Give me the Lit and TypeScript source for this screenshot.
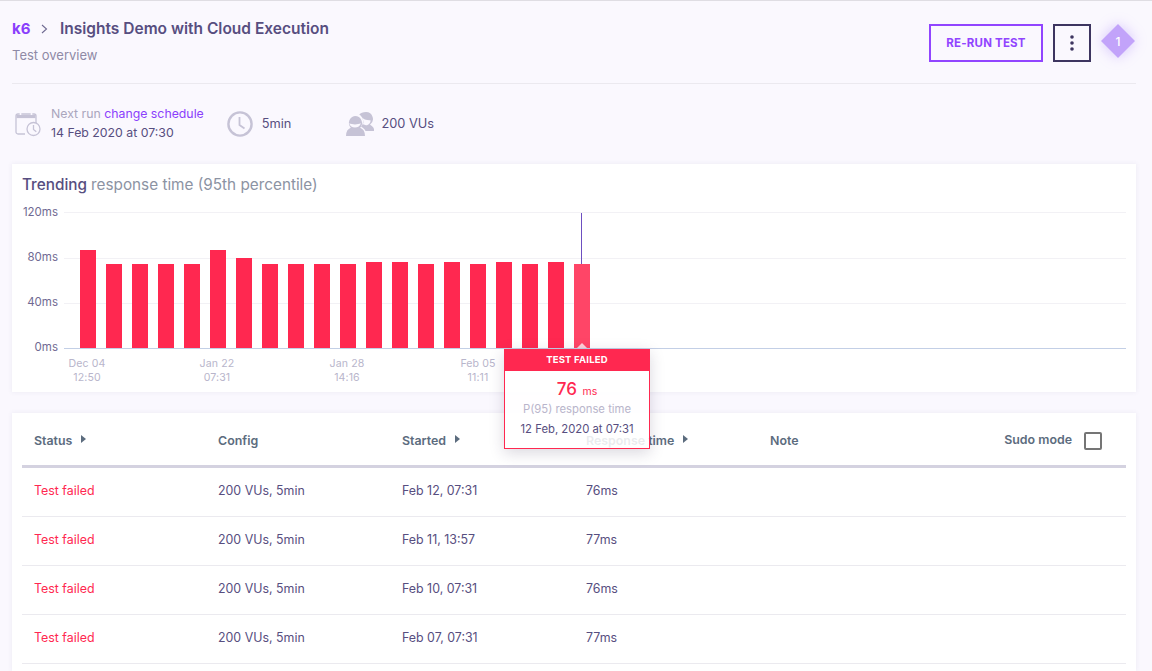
import { LitElement, html, css, svg } from "lit";
import { customElement } from "lit/decorators.js";

const tops = [250,264,264,264,264,250,258,264,264,264,264,262,262,264,262,264,262,264,262,264];
const rows = [
  ["Feb 12, 07:31", "76ms"],
  ["Feb 11, 13:57", "77ms"],
  ["Feb 10, 07:31", "76ms"],
  ["Feb 07, 07:31", "77ms"],
];
const yLabels: [string, number, number][] = [["120ms", 212, 216], ["80ms", 258, 261], ["40ms", 303, 306], ["0ms", 348, 351]];
const xLabels: [string, string, number][] = [["Dec 04", "12:50", 86], ["Jan 22", "07:31", 216], ["Jan 28", "14:16", 346], ["Feb 05", "11:11", 477]];

@customElement("app-root")
export class AppRoot extends LitElement {
  static styles = css`
    :host { display: flex; flex-direction: column; height: 671px; overflow: hidden; box-sizing: border-box; border-top: 1px solid #dfdde3; background: #faf8fe; font-family: "Inter", "Noto Sans", sans-serif; color: #574e80; padding: 0 16px 0 12px; }
    * { box-sizing: border-box; }
    .head { display: flex; justify-content: space-between; height: 83px; border-bottom: 1px solid #ebe9ef; padding-top: 23px; flex: none; }
    .crumb { display: flex; align-items: center; height: 10px; font-size: 15.5px; font-weight: 600; line-height: 10px; }
    .k6 { color: #8a3ffc; width: 29px; font-weight: 700; font-size: 15px; }
    .chev { width: 19px; }
    .sub { font-size: 13px; color: #8f8aa6; margin-top: 13px; line-height: 16px; }
    .actions { display: flex; align-items: flex-start; }
    .rerun { width: 114px; height: 38px; border: 2px solid #9145ff; color: #9145ff; font-size: 11.5px; font-weight: 700; display: flex; align-items: center; justify-content: center; letter-spacing: .2px; }
    .more { width: 38px; height: 38px; border: 2px solid #3d3560; margin-left: 10px; display: flex; align-items: center; justify-content: center; }
    .badge { width: 34px; height: 34px; margin: 0 1px 0 10px; display: flex; align-items: center; justify-content: center; }
    .diamond { width: 24px; height: 24px; background: #c2a3fa; transform: rotate(45deg); box-shadow: 0 0 14px rgba(160,120,250,.4); display: flex; align-items: center; justify-content: center; }
    .diamond span { transform: rotate(-45deg); color: #fff; font-size: 12px; font-weight: 500; }
    .meta { display: flex; align-items: center; height: 80px; flex: none; font-size: 12.3px; padding: 0 0 1px 3px; }
    .meta-item { display: flex; align-items: center; }
    .item-time { margin-left: 23px; }
    .item-vus { margin-left: 55px; }
    .val { font-size: 12.8px; margin-left: 9px; }
    .item-vus .val { margin-left: 7px; }
    .next { line-height: 19px; margin: 0 0 2px 10px; }
    .muted { color: #aaa6bd; }
    .link { color: #8a3ffc; }
    .card { background: #fff; box-shadow: 0 0 5px rgba(70,60,110,.08); }
    .chart { height: 228px; position: relative; flex: none; padding: 12px 10px 0 10px; }
    .chart h2 { margin: 0; font-size: 15.3px; font-weight: 500; color: #574e80; line-height: 18px; }
    .chart h2 span { color: #8c93a3; font-weight: 400; }
    .plot { display: block; position: absolute; left: 0; top: 0; }
    .plot text { font-family: "Inter", "Noto Sans", sans-serif; font-size: 11.5px; }
    .plot text.x { font-size: 10.6px; letter-spacing: .1px; }
    .tip { position: absolute; left: 492px; top: 185px; width: 146px; height: 100px; border: 1px solid #ff2850; background: rgba(255,255,255,.87); box-shadow: 0 4px 14px rgba(50,40,80,.18); z-index: 2; text-align: center; }
    .tip-h { height: 21px; background: #ff2850; color: #fff; font-size: 9.5px; font-weight: 700; line-height: 20px; letter-spacing: .2px; }
    .tip-v { color: #ff2850; font-size: 17px; font-weight: 500; line-height: 20px; margin-top: 8px; }
    .tip-v small { font-size: 10.5px; font-weight: 400; margin-left: 1px; }
    .tip-l { color: #b9b5cb; font-size: 11.3px; line-height: 14px; margin-top: 0; }
    .tip-d { color: #574e80; font-size: 11.3px; line-height: 14px; margin-top: 6px; }
    .table { flex: 1; margin-top: 21px; padding: 0 10px; }
    .tr { display: grid; grid-template-columns: repeat(5, 184px) 1fr; align-items: center; padding-left: 12px; }
    .th { height: 55px; border-bottom: 3px solid #d4d2e0; font-size: 12.4px; font-weight: 600; color: #5c6c7e; padding-top: 3px; }
    .td { height: 49px; border-bottom: 1px solid #ebeaef; font-size: 12.4px; color: #574e80; padding-bottom: 3px; }
    .fail { color: #ff2850; }
    .sort { display: inline-block; width: 0; height: 0; border-left: 5px solid #5c6c7e; border-top: 4px solid transparent; border-bottom: 4px solid transparent; margin-left: 9px; position: relative; top: -2px; }
    .sudo { display: flex; justify-content: flex-end; align-items: center; gap: 12px; padding-right: 24px; }
    .sudo span { position: relative; top: -1px; }
    .box { width: 18px; height: 18px; border: 2px solid #757575; border-radius: 2px; }
  `;

  private plot() {
    return html`<svg class="plot" width="1124" height="228" viewBox="12 164 1124 228">
      ${yLabels.map(([t, y, ty]) => svg`
        <line x1="64" x2="1126" y1=${y + 0.5} y2=${y + 0.5} stroke=${t === "0ms" ? "#c3cfe6" : "#f2f1f5"} />
        <text x="58" y=${ty} text-anchor="end" fill="#6f6a92">${t}</text>`)}
      ${tops.map((t, i) => svg`<rect x=${80 + i * 26} y=${t} width="16" height=${348 - t} fill=${i === 19 ? "#ff4567" : "#ff2850"} />`)}
      <line x1="581.5" x2="581.5" y1="213" y2="264" stroke="#6d4fc0" />
      <path d="M577 348 L582 343 L587 348 Z" fill="#fff" opacity=".75" />
      ${xLabels.map(([a, b, x]) => svg`
        <text class="x" x=${x + 1} y="367" text-anchor="middle" fill="#b8b5cb">${a}</text>
        <text class="x" x=${x + 1} y="381" text-anchor="middle" fill="#b8b5cb">${b}</text>`)}
    </svg>`;
  }

  render() {
    return html`
      <div class="head">
        <div>
          <div class="crumb"><span class="k6">k6</span>
            <span class="chev"><svg width="7" height="10" viewBox="0 0 7 10"><path d="M1 1l4.500 4L1 9" fill="none" stroke="#6f6a92" stroke-width="1.100"/></svg></span>
            <span>Insights Demo with Cloud Execution</span></div>
          <div class="sub">Test overview</div>
        </div>
        <div class="actions">
          <div class="rerun">RE-RUN TEST</div>
          <div class="more"><svg width="4" height="16" viewBox="0 0 4 16" fill="#3d3560"><circle cx="2" cy="2" r="1.800"/><circle cx="2" cy="8" r="1.800"/><circle cx="2" cy="14" r="1.800"/></svg></div>
          <div class="badge"><div class="diamond"><span>1</span></div></div>
        </div>
      </div>
      <div class="meta">
        <div class="meta-item">
          <svg width="26" height="26" viewBox="0 0 26 26" fill="none" stroke="#c6c3d6" stroke-width="1.300">
            <path d="M10 23H3a2 2 0 0 1-2-2V5a2 2 0 0 1 2-2h16a2 2 0 0 1 2 2v7"/>
            <path d="M1.500 5.500h19" stroke-width="3.200"/>
            <path d="M5.500 1v3M16.500 1v3" stroke="#faf8fe" stroke-width="1.600"/>
            <circle cx="18.500" cy="18" r="6.500" fill="#faf8fe"/>
            <path d="M18.500 14v4.500l2.800 2.200"/>
          </svg>
          <div class="next"><div><span class="muted">Next run</span> <span class="link">change schedule</span></div><div>14 Feb 2020 at 07:30</div></div>
        </div>
        <div class="meta-item item-time">
          <svg width="26" height="26" viewBox="0 0 26 26" fill="none" stroke="#c6c3d6" stroke-width="2.400"><circle cx="13" cy="13" r="11.600"/><path d="M12.500 6v8l5 3.500" stroke-width="1.800"/></svg>
          <span class="val">5min</span>
        </div>
        <div class="meta-item item-vus">
          <svg width="28" height="26" viewBox="0 0 28 26" fill="#c6c3d6">
            <path d="M20 1a7 7 0 0 1 4 12.700c1.700.9 3.300 2.200 4 4.300v2h-8.500c-1-2-2.500-3.300-4.500-4.200 1.500-1.800 2.200-4 2-6.500C16.800 7 15.600 5.200 13.300 3.500 14.500 2 17 1 20 1z"/>
            <path d="M15 5.800c2 1.700 3 5.300 2 7.400l3 1c3 0 4.800-2.800 4.500-5-3 .3-7.200-.6-9.500-3.400z" fill="#faf8fe"/>
            <path d="M9 5a7 7 0 0 1 5.200 11.700c3 1.100 4.800 3.800 4.800 8.300H0c0-4.500 1.800-7.200 4.800-8.300A7 7 0 0 1 9 5z"/>
            <path d="M3.200 12.300c3 1.500 8.600 1.500 11.600 0-.5 2.800-3 4.200-5.800 4.200s-5.300-1.400-5.800-4.200z" fill="#faf8fe"/>
          </svg>
          <span class="val">200 VUs</span>
        </div>
      </div>
      <div class="card chart">
        <h2>Trending <span>response time (95th percentile)</span></h2>
        ${this.plot()}
        <div class="tip">
          <div class="tip-h">TEST FAILED</div>
          <div class="tip-v">76 <small>ms</small></div>
          <div class="tip-l">P(95) response time</div>
          <div class="tip-d">12 Feb, 2020 at 07:31</div>
        </div>
      </div>
      <div class="card table">
        <div class="tr th">
          <div>Status<i class="sort"></i></div>
          <div>Config</div>
          <div>Started<i class="sort"></i></div>
          <div>Response time<i class="sort"></i></div>
          <div>Note</div>
          <div class="sudo"><span>Sudo mode</span><div class="box"></div></div>
        </div>
        ${rows.map(([d, r]) => html`<div class="tr td"><div class="fail">Test failed</div><div>200 VUs, 5min</div><div>${d}</div><div>${r}</div><div></div><div></div></div>`)}
      </div>
    `;
  }
}
